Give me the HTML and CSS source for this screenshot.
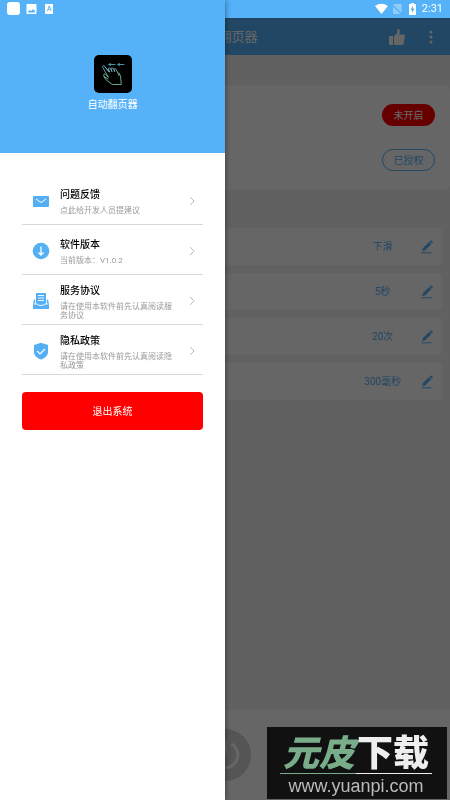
FILE: index.html
```html
<!DOCTYPE html>
<html lang="zh-CN">
<head>
<meta charset="utf-8">
<meta name="viewport" content="width=device-width, initial-scale=1">
<title>自动翻页器</title>
<link rel="stylesheet" href="styles.css">
</head>
<body>
<svg class="defs" aria-hidden="true">
  <symbol id="pencil" viewBox="0 0 12 14">
    <path d="M1.2 11.2l.8-3.1 6-6 2.2 2.2-6 6zM8.6 1.5l.8-.8a.9.9 0 0 1 1.2 0l1 1a.9.9 0 0 1 0 1.2l-.8.8z" fill="currentColor"/>
    <path d="M.5 12.8h10" stroke="currentColor"/>
  </symbol>
  <symbol id="chevron" viewBox="0 0 6 10">
    <path d="M1 1l4 4-4 4" fill="none" stroke="currentColor"/>
  </symbol>
</svg>

<div class="app">
  <div class="statusbar"></div>
  <header class="appbar">
    <h1 class="appbar-title">自动翻页器</h1>
    <div class="appbar-actions">
      <button class="icon-button" type="button" aria-label="点赞">
        <svg width="16" height="16" viewBox="0 0 16 16" fill="currentColor"><path d="M0 7h4v9H0zM5 7.2L8.2 4V1.2C8.2.4 8.700 0 9.300 0c1.200 0 1.700 1 1.500 2.200L10.300 5.500H14.500c1 0 1.500.8 1.400 1.600l-1.300 7.400c-.2.900-.8 1.500-1.600 1.500H5z"/></svg>
      </button>
      <button class="icon-button" type="button" aria-label="更多">
        <svg width="4" height="14" viewBox="0 0 4 14" fill="currentColor"><circle cx="2" cy="2" r="1.500"/><circle cx="2" cy="7" r="1.500"/><circle cx="2" cy="12" r="1.500"/></svg>
      </button>
    </div>
  </header>
  <main class="content">
    <section class="permissions">
      <button class="pill pill-off" type="button">未开启</button>
      <button class="pill pill-on" type="button">已授权</button>
    </section>
    <section class="settings">
      <div class="setting"><span class="value">下滑</span><button class="edit" type="button" aria-label="编辑"><svg width="12" height="14"><use href="#pencil"/></svg></button></div>
      <div class="setting"><span class="value">5秒</span><button class="edit" type="button" aria-label="编辑"><svg width="12" height="14"><use href="#pencil"/></svg></button></div>
      <div class="setting"><span class="value">20次</span><button class="edit" type="button" aria-label="编辑"><svg width="12" height="14"><use href="#pencil"/></svg></button></div>
      <div class="setting"><span class="value">300毫秒</span><button class="edit" type="button" aria-label="编辑"><svg width="12" height="14"><use href="#pencil"/></svg></button></div>
    </section>
  </main>
  <footer class="bottom">
    <button class="power" type="button" aria-label="启动">
      <svg width="30" height="30" viewBox="0 0 30 30" fill="none" stroke="currentColor" stroke-width="3" stroke-linecap="round"><path d="M15 2v12M22.500 4.500a12.800 12.800 0 1 1-15 0"/></svg>
    </button>
  </footer>
</div>

<div class="scrim"></div>

<aside class="drawer">
  <div class="profile">
    <svg class="logo" viewBox="0 0 38 38">
      <rect width="38" height="38" rx="5" fill="#000"/>
      <g fill="none" stroke-width=".8" stroke-linejoin="round" stroke-linecap="round">
        <path stroke="#7fc4d8" d="M15 17L10.500 11.200c-.8-1-2.500-.2-1.800 1.200l5.500 9.600M11 12l4.500 5 -1-3c0-1.500 1.500-1.500 2 -.3l1.500 3-1-3c.3-1.300 1.700-1.200 2.200 0l1.600 3-.8-2.500c.5-1 1.600-.8 2.100.2l2.900 6"/>
        <path stroke="#79d6b0" d="M14.200 22l-2.500-2.700c-1-.8-2.500 0-2 1.300l1.800 3.700 5.500 4.200 1.500 1h8.800l-.8-8.300-1.500-3.300M10 21.500l4 2.500"/>
        <path stroke="#50b9cc" d="M15 9.500h6M15 9.500l1.500-1M15 9.500l1.500 1M24 9.500h6M24 9.500l1.500-1M24 9.500l1.500 1"/>
      </g>
    </svg>
    <span class="profile-name">自动翻页器</span>
  </div>
  <nav class="menu">
    <a class="item" href="#feedback">
      <svg class="item-icon" viewBox="0 0 18 18"><rect x="1" y="4" width="16" height="11" rx="1" fill="#55aff5"/><path d="M4 7l5 3.500L14 7" fill="none" stroke="#fff"/></svg>
      <span class="item-text"><span class="item-title">问题反馈</span><span class="item-note">点此给开发人员提建议</span></span>
      <svg class="chevron"><use href="#chevron"/></svg>
    </a>
    <a class="item" href="#version">
      <svg class="item-icon" viewBox="0 0 18 18"><circle cx="9" cy="9" r="8.300" fill="#55aff5"/><path d="M9 4.500v8M6.500 10.500L9 13l2.500-2.500" fill="none" stroke="#fff" stroke-width="1.300"/></svg>
      <span class="item-text"><span class="item-title">软件版本</span><span class="item-note">当前版本：V1.0.2</span></span>
      <svg class="chevron"><use href="#chevron"/></svg>
    </a>
    <a class="item" href="#terms">
      <svg class="item-icon" viewBox="0 0 18 18"><path d="M4 1h10v11H4zM2 7.500h1.200V12H14.800V7.500H16L17 12v5H1v-5z" fill="#55aff5"/><path d="M6 3.500h6M6 6h6M6 8.500h6M1.500 12h3.500c1 2 7 2 8 0h3.500" fill="none" stroke="#fff" stroke-width=".9"/></svg>
      <span class="item-text"><span class="item-title">服务协议</span><span class="item-note">请在使用本软件前先认真阅读服务协议</span></span>
      <svg class="chevron"><use href="#chevron"/></svg>
    </a>
    <a class="item" href="#privacy">
      <svg class="item-icon" viewBox="0 0 18 18"><path d="M9 .8l7 2.200v7c0 3.500-3 6-7 7.500-4-1.500-7-4-7-7.500V3z" fill="#55aff5"/><path d="M5.200 9l2.800 3 5-5" fill="none" stroke="#fff" stroke-width="1.200"/></svg>
      <span class="item-text"><span class="item-title">隐私政策</span><span class="item-note">请在使用本软件前先认真阅读隐私政策</span></span>
      <svg class="chevron"><use href="#chevron"/></svg>
    </a>
  </nav>
  <button class="logout" type="button">退出系统</button>
</aside>

<div class="system">
  <svg width="46" height="14" viewBox="0 0 46 14" fill="#fff">
    <rect width="13" height="13" rx="3"/>
    <path fill-rule="evenodd" d="M20.500 2h8a1 1 0 0 1 1 1v8a1 1 0 0 1-1 1h-8a1 1 0 0 1-1-1V3a1 1 0 0 1 1-1zm.5 8.500h7V9l-2-2-1.500 2L23 8l-2 1.500z"/>
    <path fill-rule="evenodd" d="M39 2h7v10h-7a1 1 0 0 1-1-1V3a1 1 0 0 1 1-1zm1 7h1l.4-1.200h1.800L43.600 9h1l-1.800-5.200h-1zm1.700-2l.6-1.900.6 1.900z"/>
  </svg>
  <div class="system-right">
    <svg width="42" height="12" viewBox="0 0 42 12" fill="#fff">
      <path d="M0 3q6.500-4.500 13 0L6.500 11z"/>
      <path d="M18 1.500L26.500 10V1H20zM18 3.500V11h7.500z" opacity=".35"/>
      <path fill-rule="evenodd" d="M36 0h3v1h2v11h-7V1h2zm2 2.500L35.500 7H37v3l2.500-4.500H38z"/>
    </svg>
    <span class="clock">2:31</span>
  </div>
</div>

<div class="watermark">
  <div class="brand"><span class="brand-green">元皮</span><span>下载</span></div>
  <div class="rule"></div>
  <div class="site">www.yuanpi.com</div>
</div>
</body>
</html>
```
FILE: styles.css
```css
* { box-sizing: border-box; }

body {
  margin: 0;
  font-family: Roboto, "Noto Sans CJK SC", sans-serif;
  font-size: 10px;
  line-height: 14px;
  color: #111;
  background: #f3f3f3;
}

button {
  font: inherit;
  padding: 0;
  border: 0;
  background: none;
}

svg { display: block; flex: none; }

.defs { position: absolute; width: 0; height: 0; }

.app {
  min-height: 100vh;
  display: flex;
  flex-direction: column;
}

.statusbar { height: 18px; background: #55b2f9; }

.appbar {
  display: grid;
  grid-template-columns: 1fr auto 1fr;
  align-items: center;
  height: 37px;
  padding: 0 17px;
  background: #55b2f9;
  color: #fff;
}

.appbar-title {
  grid-column: 2;
  margin: 0;
  font-size: 13px;
  font-weight: 400;
}

.appbar-actions {
  display: flex;
  justify-content: flex-end;
  align-items: center;
  gap: 24px;
}

.icon-button { color: #fff; }

.content { flex: 1; padding-top: 30px; }

.permissions {
  display: flex;
  flex-direction: column;
  align-items: flex-end;
  gap: 23px;
  padding: 19px 15px;
  background: #fff;
  border-radius: 6px;
}

.pill {
  width: 53px;
  height: 22px;
  padding-top: 2px;
  border-radius: 11px;
}

.pill-off { background: #f00; color: #fff; }
.pill-on { border: 1px solid #55b2f9; color: #55b2f9; }

.settings {
  display: flex;
  flex-direction: column;
  gap: 8px;
  padding: 38px 8px;
}

.setting {
  display: flex;
  justify-content: flex-end;
  align-items: center;
  gap: 8px;
  height: 37px;
  padding-right: 9px;
  background: #fff;
  border-radius: 4px;
  color: #55b2f9;
}

.value { width: 61px; text-align: center; }
.edit { color: #55b2f9; }

.bottom {
  display: flex;
  justify-content: center;
  align-items: center;
  height: 90px;
  background: #fff;
}

.power {
  display: flex;
  justify-content: center;
  align-items: center;
  width: 52px;
  height: 52px;
  border-radius: 50%;
  background: #d4d4d4;
  color: #fff;
}

.scrim {
  position: fixed;
  inset: 18px 0 0;
  background: rgba(0, 0, 0, 0.6);
}

.drawer {
  position: fixed;
  inset: 0 auto 0 0;
  width: 50%;
  background: #fff;
  box-shadow: 0 0 6px rgba(0, 0, 0, 0.5);
}

.profile {
  display: flex;
  flex-direction: column;
  align-items: center;
  gap: 5px;
  height: 153px;
  padding-top: 55px;
  background: #55b2f9;
  color: #fff;
}

.logo { width: 38px; height: 38px; }

.menu { padding: 22px 22px 0; }

.item {
  display: flex;
  align-items: center;
  height: 50px;
  padding: 2px 8px 0 10px;
  border-bottom: 1px solid #d8d8d8;
  color: inherit;
  text-decoration: none;
}

.item-icon { width: 18px; height: 18px; }

.item-text {
  flex: 1;
  display: flex;
  flex-direction: column;
  gap: 4px;
  padding: 2px 14px 0 10px;
}

.item-title { font-weight: 500; color: #000; }

.item-note {
  font-size: 8px;
  line-height: 9px;
  color: #999;
}

.chevron { width: 6px; height: 10px; color: #bbb; }

.logout {
  display: block;
  width: calc(100% - 44px);
  height: 38px;
  margin: 17px auto 0;
  padding-top: 2px;
  border-radius: 4px;
  background: #f00;
  color: #fff;
}

.system {
  position: fixed;
  inset: 0 0 auto;
  display: flex;
  justify-content: space-between;
  align-items: center;
  height: 18px;
  padding: 0 7px;
  color: #fff;
}

.system-right { display: flex; align-items: center; gap: 5px; }

.clock { font-size: 11px; }

.watermark {
  position: fixed;
  right: 3px;
  bottom: 1px;
  width: 180px;
  height: 72px;
  padding: 0 15px 0 13px;
  background: #111;
  color: #eee;
}

.brand {
  display: flex;
  justify-content: center;
  gap: 2px;
  font-family: "Noto Sans CJK SC", sans-serif;
  font-size: 36px;
  font-weight: 900;
  line-height: 46px;
  white-space: nowrap;
}

.brand-green { color: #79ad8a; font-style: italic; }

.rule {
  height: 1px;
  background: linear-gradient(90deg, #79ad8a 50%, #eee 50%);
}

.site {
  font-family: "Liberation Sans", sans-serif;
  font-size: 18px;
  line-height: 24px;
  text-align: center;
  color: #bbb;
}
```
